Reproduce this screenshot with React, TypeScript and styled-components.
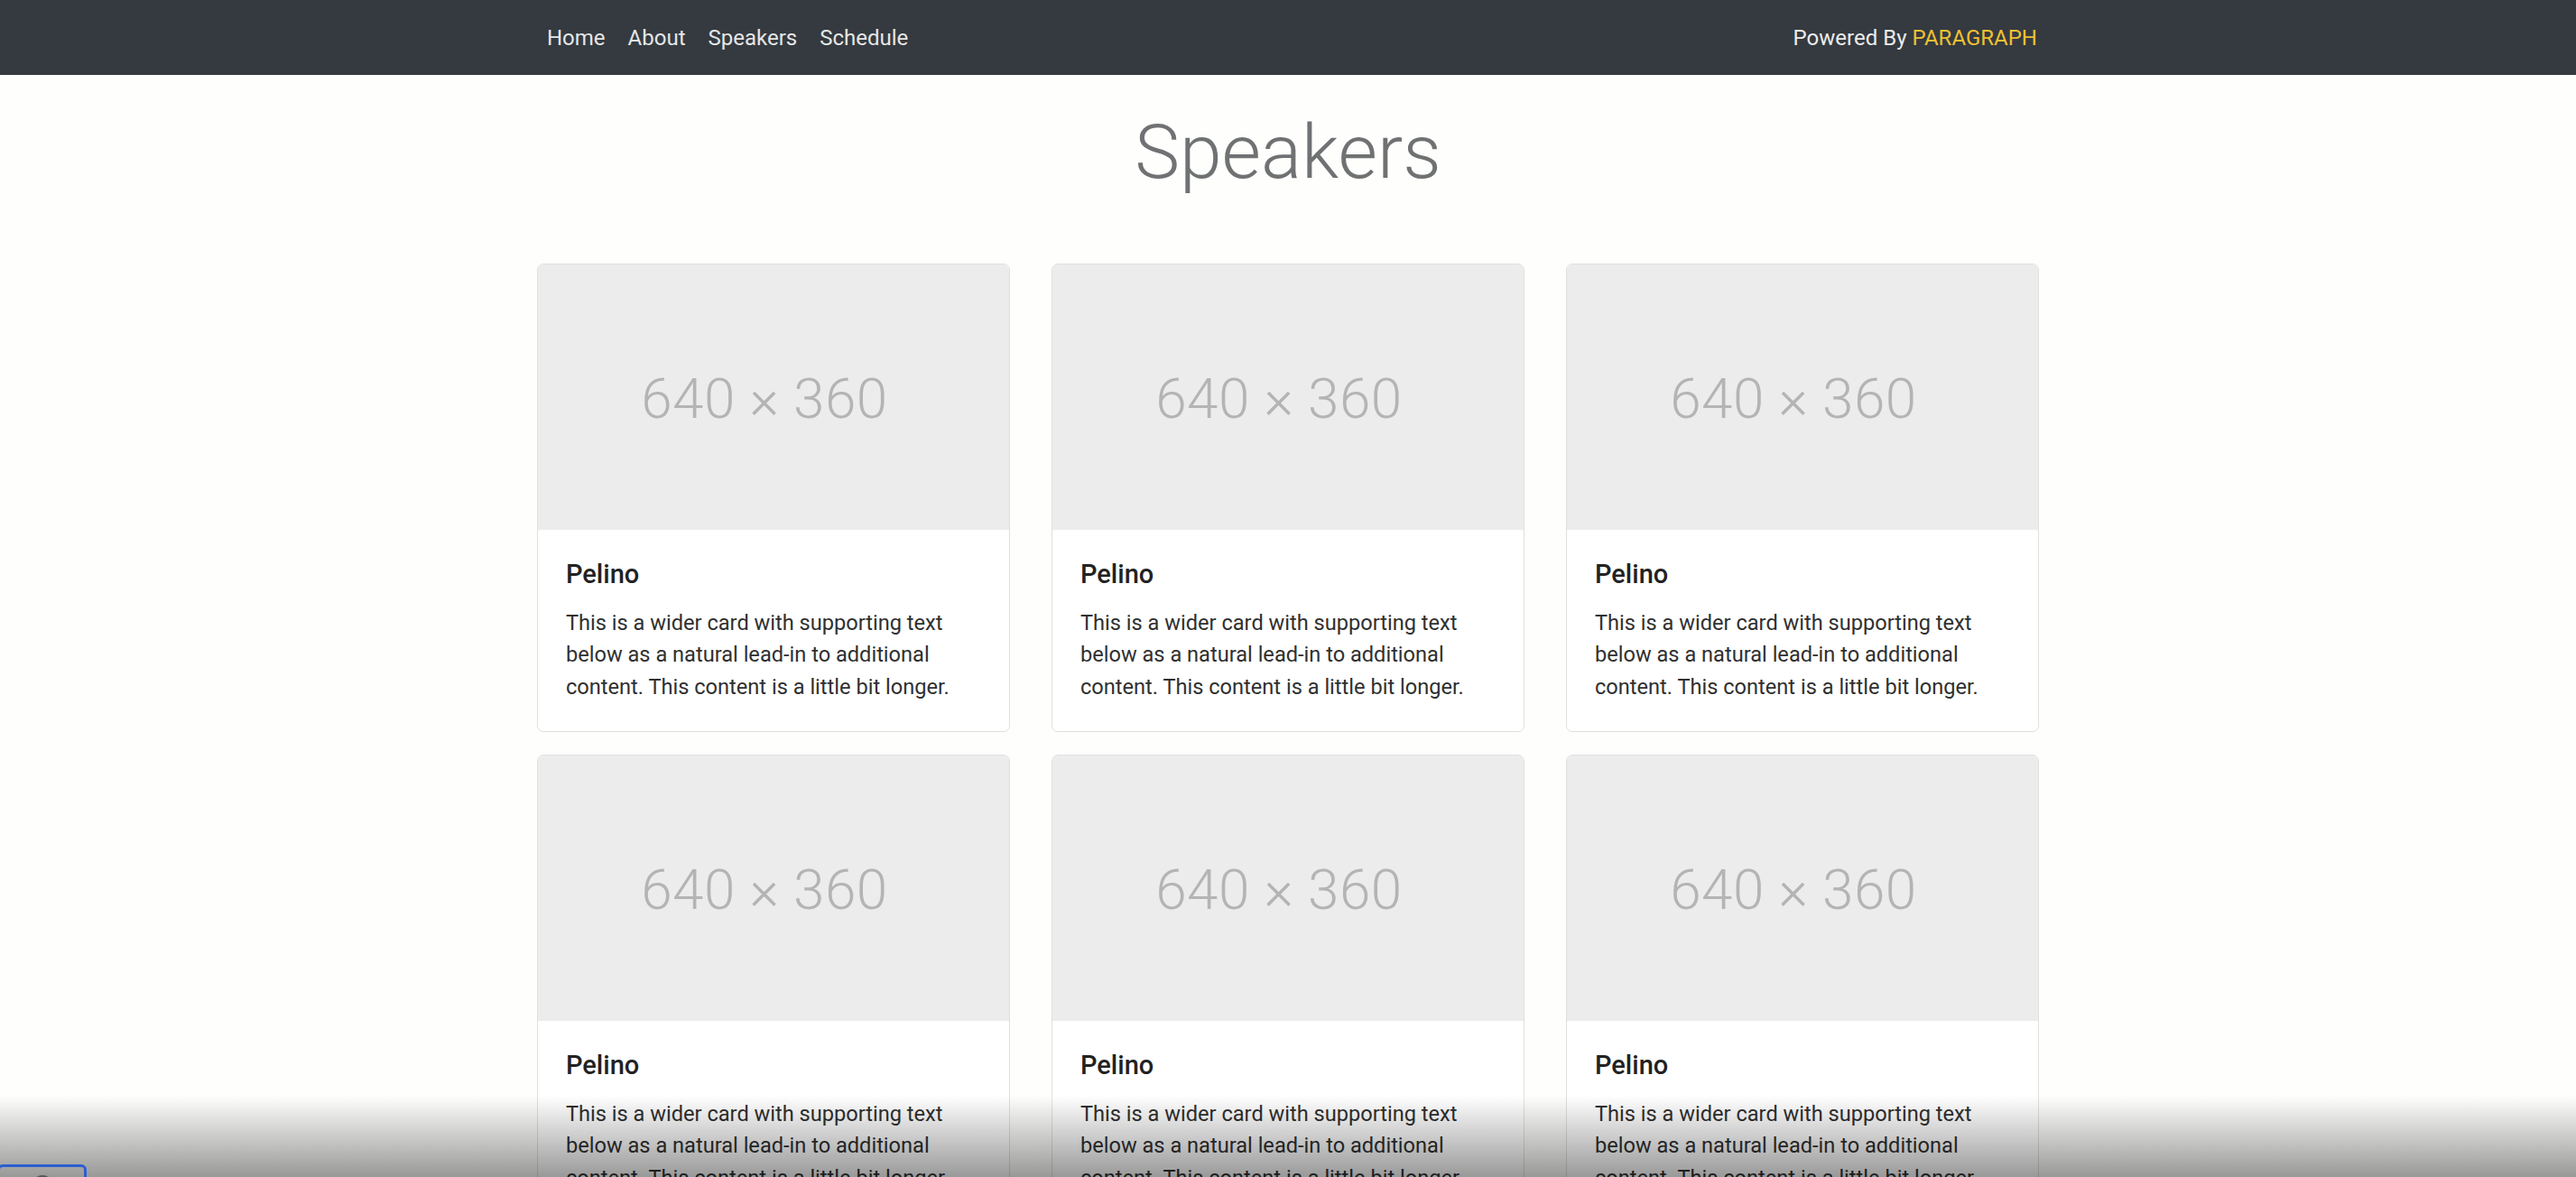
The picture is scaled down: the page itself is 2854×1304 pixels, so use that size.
import React from "react";
import styled, { createGlobalStyle } from "styled-components";

const Global = createGlobalStyle`
  html, body {
    margin: 0;
    padding: 0;
    overflow: hidden;
    background: #fefefc;
    font-family: Roboto, "Liberation Sans", Arial, sans-serif;
  }
  * { box-sizing: border-box; }
`;

const Page = styled.div`
  position: relative;
  width: 100%;
  height: 1304px;
  overflow: hidden;
  background: #fefefc;
`;

const NavBar = styled.nav`
  height: 83px;
  background: #343a40;
  display: flex;
  justify-content: center;
`;

const NavInner = styled.div`
  width: 1664px;
  display: flex;
  align-items: center;
  justify-content: space-between;
`;

const NavLinks = styled.ul`
  display: flex;
  list-style: none;
  margin: 0;
  padding: 0;
`;

const NavLink = styled.li`
  padding: 0 12.5px;
  font-size: 24px;
  color: #e6e6e6;
  &:first-child {
    padding-left: 11px;
  }
`;

const Powered = styled.div`
  font-size: 24px;
  color: #ececec;
  padding-right: 2px;
`;

const Brand = styled.span`
  color: #eec132;
`;

const Main = styled.main`
  width: 1664px;
  margin: 0 auto;
`;

const Title = styled.h1`
  margin: 36px 0 73px;
  text-align: center;
  font-size: 84px;
  line-height: 100px;
  font-weight: 300;
  color: #6f7173;
`;

const Grid = styled.div`
  display: grid;
  grid-template-columns: repeat(3, 524px);
  column-gap: 46px;
  row-gap: 25px;
`;

const Card = styled.div`
  background: #fff;
  border: 1px solid #e0e0e0;
  border-radius: 7px;
  overflow: hidden;
  display: flex;
  flex-direction: column;
`;

const Placeholder = styled.div`
  aspect-ratio: 16 / 9;
  background: #ececec;
  display: flex;
  align-items: center;
  justify-content: center;
  padding: 3px 20px 0 0;
  font-size: 62px;
  font-weight: 300;
  color: #b4b4b4;
  letter-spacing: 0.5px;
`;

const CardBody = styled.div`
  padding: 32px 31px 31px;
`;

const CardTitle = styled.h5`
  margin: 0 0 19px;
  font-size: 29px;
  line-height: 35px;
  font-weight: 500;
  color: #222;
`;

const CardText = styled.p`
  margin: 0;
  font-size: 23.6px;
  line-height: 35.5px;
  color: #303030;
`;

const Shade = styled.div`
  position: absolute;
  left: 0;
  right: 0;
  bottom: 0;
  height: 90px;
  background: linear-gradient(to bottom, rgba(0, 0, 0, 0), rgba(0, 0, 0, 0.4));
  pointer-events: none;
`;

const FocusBox = styled.div`
  position: absolute;
  left: -3px;
  top: 1290px;
  width: 99px;
  height: 40px;
  border: 3px solid #2b5fd1;
  border-radius: 6px;
  display: flex;
  justify-content: center;
`;

const FocusDot = styled.div`
  margin-top: 9px;
  width: 24px;
  height: 24px;
  border-radius: 50%;
  background: #555;
`;

const items = ["Home", "About", "Speakers", "Schedule"];

export default function App() {
  return (
    <Page>
      <Global />
      <NavBar>
        <NavInner>
          <NavLinks>
            {items.map((i) => (
              <NavLink key={i}>{i}</NavLink>
            ))}
          </NavLinks>
          <Powered>
            Powered By <Brand>PARAGRAPH</Brand>
          </Powered>
        </NavInner>
      </NavBar>
      <Main>
        <Title>Speakers</Title>
        <Grid>
          {Array.from({ length: 6 }).map((_, i) => (
            <Card key={i}>
              <Placeholder>640 × 360</Placeholder>
              <CardBody>
                <CardTitle>Pelino</CardTitle>
                <CardText>
                  This is a wider card with supporting text below as a natural
                  lead-in to additional content. This content is a little bit
                  longer.
                </CardText>
              </CardBody>
            </Card>
          ))}
        </Grid>
      </Main>
      <Shade />
      <FocusBox>
        <FocusDot />
      </FocusBox>
    </Page>
  );
}
